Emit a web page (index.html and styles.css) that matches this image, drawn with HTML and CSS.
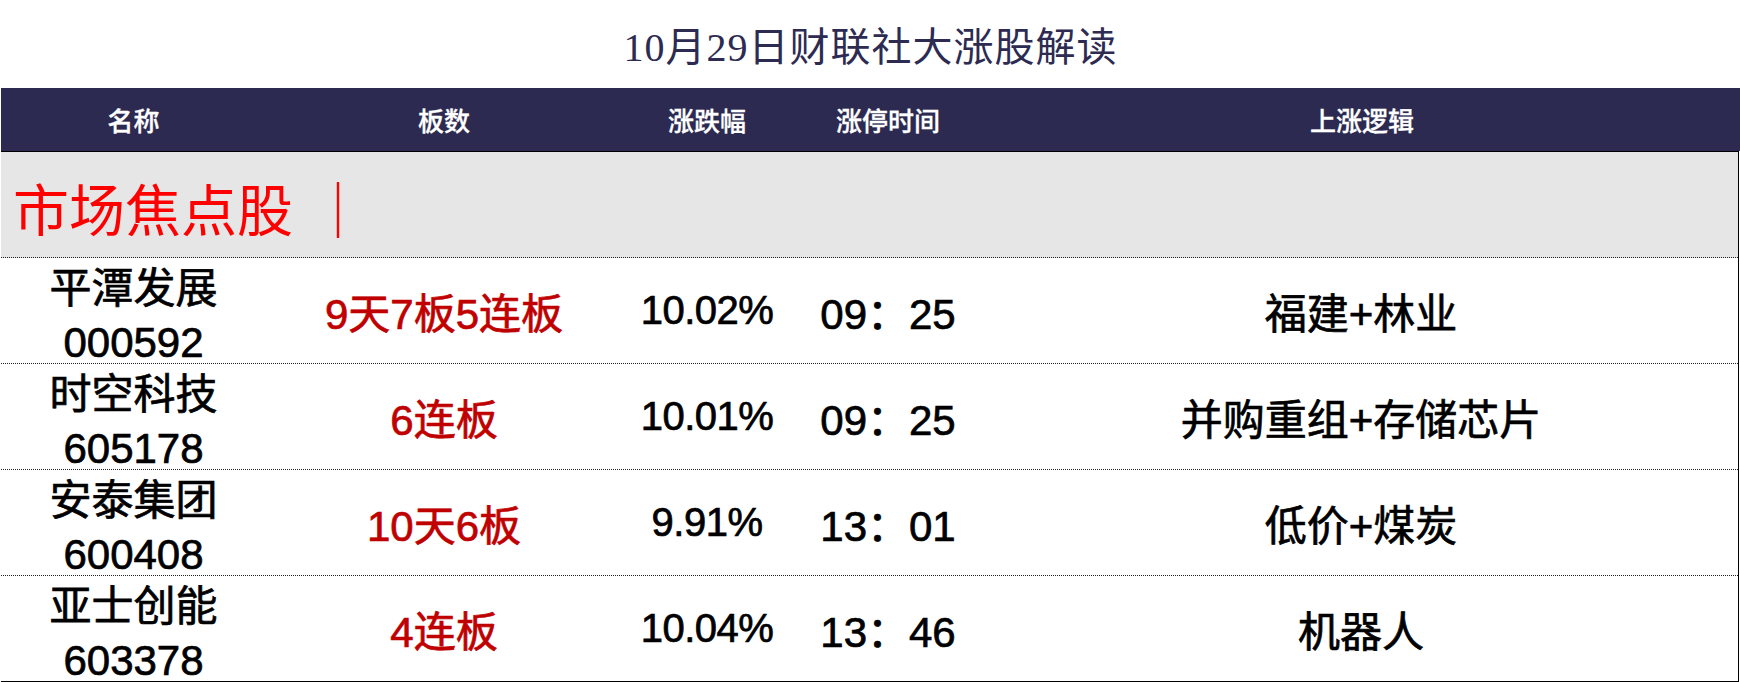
FILE: index.html
```html
<!DOCTYPE html>
<html lang="zh-CN">
<head>
<meta charset="utf-8">
<title>10月29日财联社大涨股解读</title>
<link rel="stylesheet" href="styles.css">
</head>
<body>
<div class="page">
  <h1 class="title">10月29日财联社大涨股解读</h1>
  <div class="head row-grid">
    <div>名称</div>
    <div>板数</div>
    <div>涨跌幅</div>
    <div>涨停时间</div>
    <div>上涨逻辑</div>
  </div>
  <div class="table">
    <div class="section">市场焦点股<span class="bar">｜</span></div>
    <div class="row row-grid">
      <div class="name">平潭发展<br>000592</div>
      <div class="board">9天7板5连板</div>
      <div class="pct">10.02%</div>
      <div class="time">09：25</div>
      <div class="logic">福建+林业</div>
    </div>
    <div class="row row-grid">
      <div class="name">时空科技<br>605178</div>
      <div class="board">6连板</div>
      <div class="pct">10.01%</div>
      <div class="time">09：25</div>
      <div class="logic">并购重组+存储芯片</div>
    </div>
    <div class="row row-grid">
      <div class="name">安泰集团<br>600408</div>
      <div class="board">10天6板</div>
      <div class="pct">9.91%</div>
      <div class="time">13：01</div>
      <div class="logic">低价+煤炭</div>
    </div>
    <div class="row row-grid last">
      <div class="name">亚士创能<br>603378</div>
      <div class="board">4连板</div>
      <div class="pct">10.04%</div>
      <div class="time">13：46</div>
      <div class="logic">机器人</div>
    </div>
  </div>
</div>
</body>
</html>
```
FILE: styles.css
```css
html, body {
  margin: 0;
  padding: 0;
  background: #ffffff;
}
body {
  width: 1740px;
  height: 682px;
  overflow: hidden;
  font-family: "Liberation Sans", "Noto Sans CJK SC", sans-serif;
}
.page {
  margin-left: 1px;
  width: 1739px;
}
.title {
  margin: 0;
  height: 88px;
  box-sizing: border-box;
  padding-top: 20px;
  line-height: 56px;
  text-align: center;
  font-family: "Liberation Serif", "Noto Sans CJK SC", serif;
  font-weight: normal;
  font-size: 40px;
  letter-spacing: 1px;
  color: #2d2b52;
}
.row-grid {
  display: grid;
  grid-template-columns: 265px 356px 170px 192px 1fr;
  grid-template-rows: minmax(0, 1fr);
}
.head {
  height: 63px;
  background: #2c2a51;
  color: #ffffff;
  font-family: "Noto Sans CJK SC", sans-serif;
  font-weight: 500;
  font-size: 26px;
  align-items: center;
  text-align: center;
  -webkit-text-stroke: 0.3px #ffffff;
}
.table {
  width: 1738px;
  box-sizing: border-box;
  border-top: 1px solid #000;
  border-right: 1px solid #000;
  border-bottom: 1px solid #000;
}
.section {
  height: 106px;
  box-sizing: border-box;
  background: #e6e6e6;
  border-bottom: 1px dotted #222;
  display: flex;
  align-items: center;
  padding-left: 12px;
  padding-top: 3px;
  font-family: "Noto Sans CJK SC", serif;
  font-size: 56px;
  color: #ff0000;
}
.bar {
  margin-left: 17px;
}
.row {
  height: 106px;
  box-sizing: border-box;
  border-bottom: 1px dotted #222;
  align-items: center;
  text-align: center;
  font-size: 42px;
  color: #000;
  -webkit-text-stroke: 0.7px currentColor;
}
.row.last {
  border-bottom: none;
  height: 105px;
}
.name {
  line-height: 54px;
  margin-top: 11px;
}
.board {
  color: #c00000;
}
.pct {
  font-size: 40px;
  letter-spacing: -0.5px;
}
```
